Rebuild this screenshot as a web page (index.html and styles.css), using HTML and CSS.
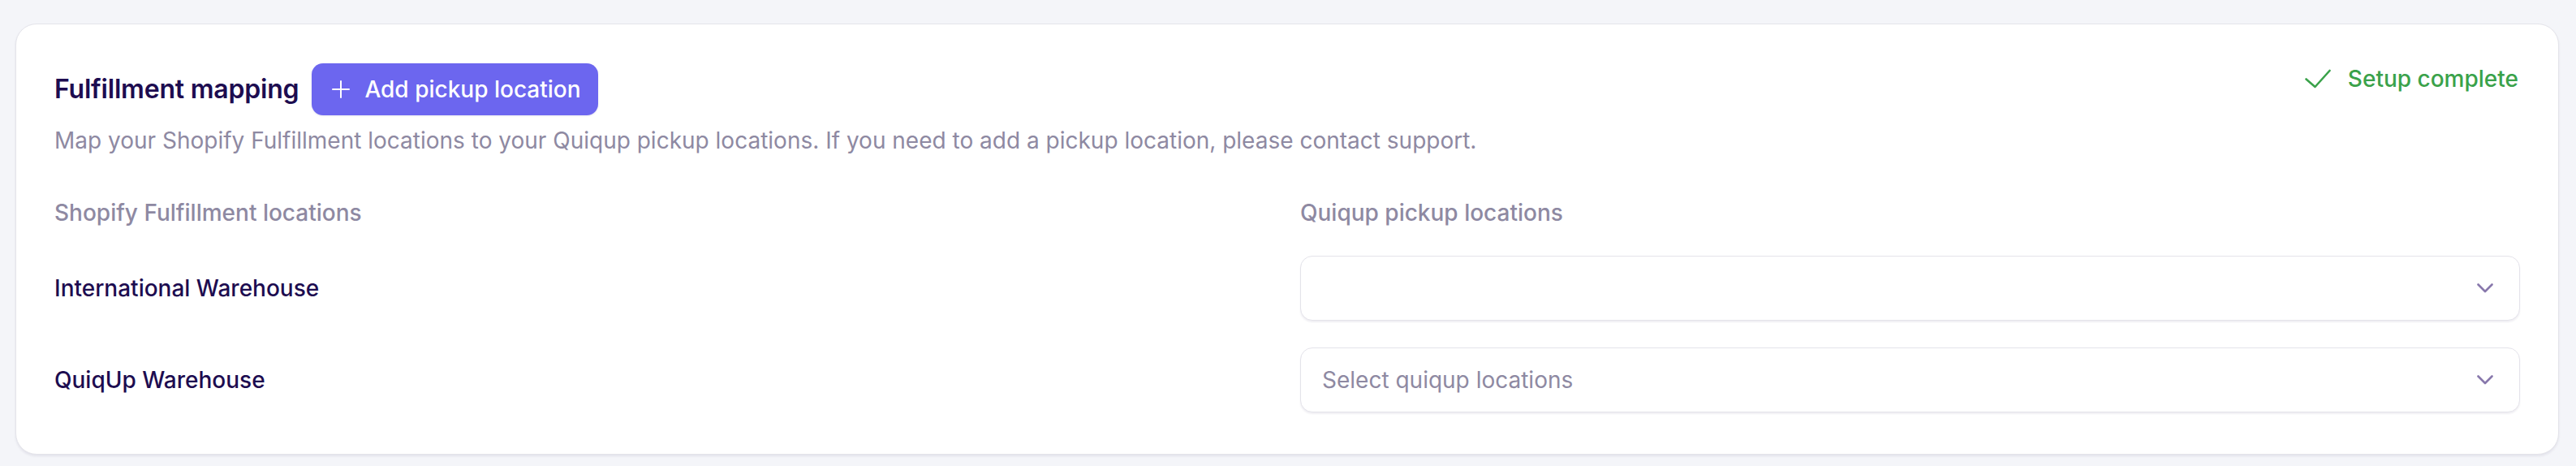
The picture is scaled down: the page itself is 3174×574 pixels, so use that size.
FILE: index.html
```html
<!DOCTYPE html>
<html lang="en">
<head>
<meta charset="utf-8">
<title>Fulfillment mapping</title>
<link rel="stylesheet" href="styles.css">
</head>
<body>
<div class="page">
  <section class="card">
    <div class="header">
      <div class="title-group">
        <h2 class="title">Fulfillment mapping</h2>
        <button class="add-btn" type="button">
          <svg class="plus" width="22" height="22" viewBox="0 0 22 22" aria-hidden="true">
            <path d="M11 1v20M1 11h20" stroke="#ffffff" stroke-width="2" stroke-linecap="round" fill="none"/>
          </svg>
          <span>Add pickup location</span>
        </button>
      </div>
      <div class="status">
        <svg class="check" width="32" height="24" viewBox="0 0 32 24" aria-hidden="true">
          <path d="M1.5 12.5l11 9.5L30.5 2" stroke="#3aa24a" stroke-width="2.6" stroke-linecap="round" stroke-linejoin="round" fill="none"/>
        </svg>
        <span>Setup complete</span>
      </div>
    </div>
    <p class="desc">Map your Shopify Fulfillment locations to your Quiqup pickup locations. If you need to add a pickup location, please contact support.</p>
    <div class="grid">
      <div class="col-head">Shopify Fulfillment locations</div>
      <div class="col-head">Quiqup pickup locations</div>

      <div class="loc">International Warehouse</div>
      <div class="select">
        <span class="placeholder"></span>
        <svg class="chev" width="20" height="12" viewBox="0 0 20 12" aria-hidden="true">
          <path d="M1.5 1.5L10 10l8.5-8.5" stroke="#8878ac" stroke-width="2.6" stroke-linecap="round" stroke-linejoin="round" fill="none"/>
        </svg>
      </div>

      <div class="loc">QuiqUp Warehouse</div>
      <div class="select">
        <span class="placeholder">Select quiqup locations</span>
        <svg class="chev" width="20" height="12" viewBox="0 0 20 12" aria-hidden="true">
          <path d="M1.5 1.5L10 10l8.5-8.5" stroke="#8878ac" stroke-width="2.6" stroke-linecap="round" stroke-linejoin="round" fill="none"/>
        </svg>
      </div>
    </div>
  </section>
</div>
</body>
</html>
```

FILE: styles.css
```css
* { box-sizing: border-box; }

html, body {
  margin: 0;
  padding: 0;
  background: #f4f5f9;
  font-family: "Inter", "Noto Sans", "Liberation Sans", sans-serif;
  font-size: 28px;
  line-height: 40px;
}

.page {
  padding: 29px 21px 19px 19px;
}

.card {
  background: #ffffff;
  border: 1px solid #e4e4ea;
  border-radius: 26px;
  box-shadow: 0 2px 3px rgba(40, 30, 80, 0.08);
  padding: 47px 47px 51px 47px;
}

.header {
  display: flex;
  justify-content: space-between;
  align-items: flex-start;
}

.title-group {
  display: flex;
  align-items: center;
  gap: 16px;
  height: 65px;
}

.title {
  margin: 0;
  font-size: 32px;
  font-weight: 600;
  color: #1d0c50;
  line-height: 40px;
  letter-spacing: -0.2px;
}

.add-btn {
  display: flex;
  align-items: center;
  gap: 18px;
  height: 64px;
  margin-top: 1px;
  padding: 0 21px 0 25px;
  border: none;
  border-radius: 14px;
  background: #6c66ef;
  color: #ffffff;
  font-family: inherit;
  font-size: 28px;
  font-weight: 500;
  line-height: 40px;
  box-shadow: 0 1px 2px rgba(40, 30, 120, 0.12);
}

.plus { display: block; flex: none; }

.status {
  display: flex;
  align-items: center;
  gap: 21px;
  color: #3aa24a;
  font-weight: 500;
  line-height: 40px;
  padding-right: 2px;
}

.check { display: block; flex: none; }

.desc {
  margin: 11px 0 0 0;
  color: #8e89a2;
  font-weight: 400;
}

.grid {
  display: grid;
  grid-template-columns: 1fr 1fr;
  column-gap: 32px;
  row-gap: 33px;
  align-items: center;
  margin-top: 49px;
}

.col-head {
  color: #8e89a2;
  font-weight: 500;
}

.loc {
  color: #1d0c50;
  font-weight: 500;
}

.select {
  display: flex;
  align-items: center;
  justify-content: space-between;
  height: 80px;
  padding: 0 32px 0 26px;
  border: 1px solid #e4e3ea;
  border-radius: 15px;
  background: #ffffff;
  box-shadow: 0 2px 2px rgba(40, 30, 80, 0.07);
}

.placeholder {
  color: #8e89a2;
  font-weight: 400;
}

.chev { display: block; flex: none; }
```
